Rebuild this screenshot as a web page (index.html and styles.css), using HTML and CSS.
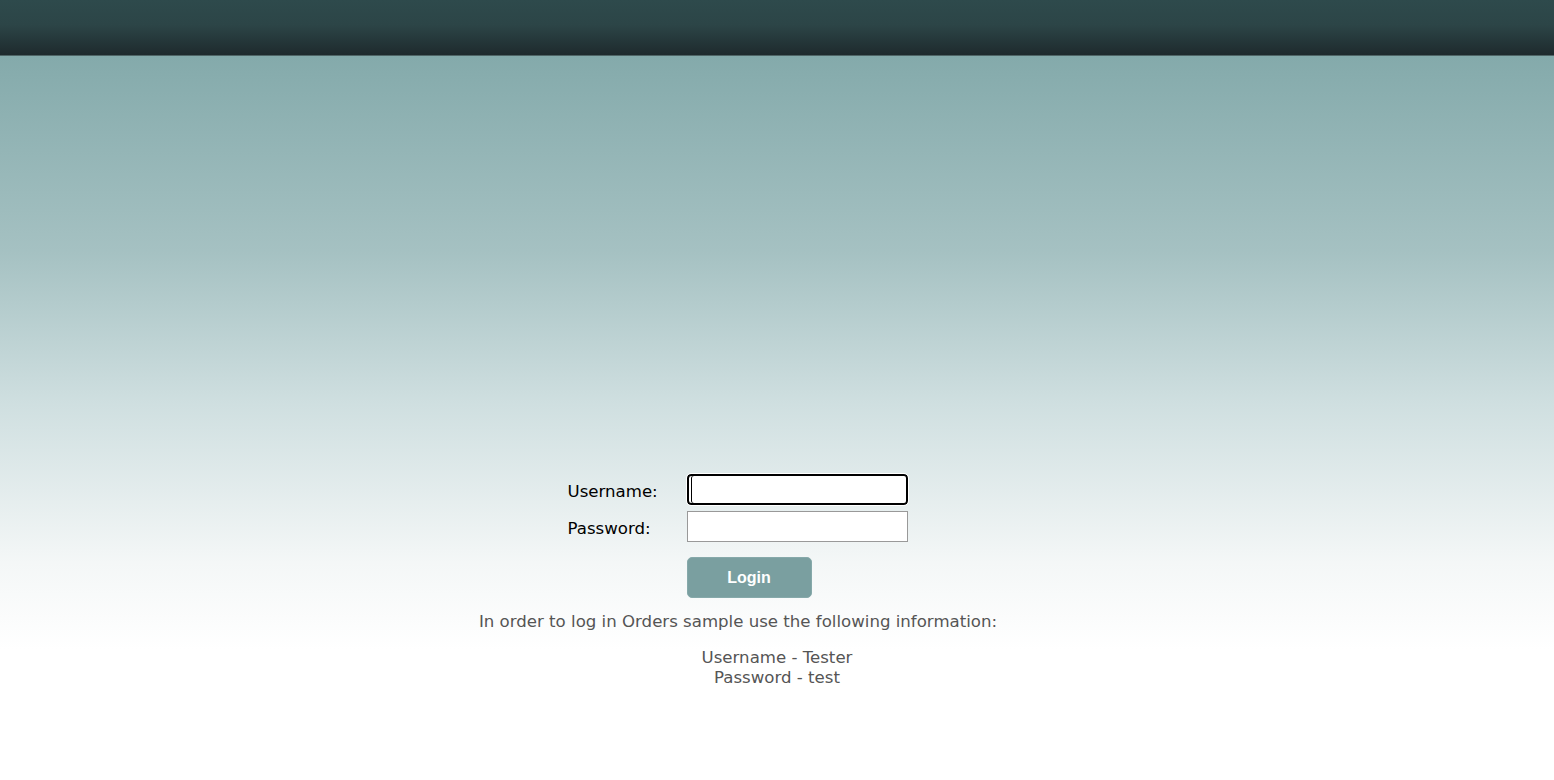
FILE: index.html
```html
<!DOCTYPE html>
<html>
<head>
<meta charset="utf-8">
<title>Login</title>
<link rel="stylesheet" href="styles.css">
</head>
<body>
<header class="topbar"></header>
<main class="page">
  <section class="login">
    <form class="login-form">
      <div class="row">
        <label class="label" for="user">Username:</label>
        <input class="field field-focus" id="user" type="text">
      </div>
      <div class="row">
        <label class="label" for="pass">Password:</label>
        <input class="field" id="pass" type="password">
      </div>
      <div class="row row-button">
        <span class="label"></span>
        <button class="btn" type="button">Login</button>
      </div>
    </form>
    <p class="info">In order to log in Orders sample use the following information:</p>
  </section>
  <div class="creds">
    <div>Username - Tester</div>
    <div>Password - test</div>
  </div>
</main>
</body>
</html>
```

FILE: styles.css
```css
html, body {
  margin: 0;
  padding: 0;
  height: 100%;
}
body {
  font-family: "DejaVu Sans", Verdana, sans-serif;
  background: #ffffff;
}
.topbar {
  height: 55px;
  background: linear-gradient(#2e4a4c 0%, #2c4547 45%, #1e2a2d 100%);
  border-bottom: 1px solid #4f6566;
}
.page {
  height: 724px;
  background: linear-gradient(#84aaab 0%, #a5c1c2 27%, #cfdfe0 48%, #f4f7f7 70%, #ffffff 82%, #ffffff 100%);
  display: flex;
  flex-direction: column;
  align-items: center;
  padding-top: 418px;
  box-sizing: border-box;
}
.login {
  display: flex;
  flex-direction: column;
  align-items: center;
  margin-right: 78px;
}
.login-form {
  display: flex;
  flex-direction: column;
  gap: 6px;
  width: 341px;
  margin-right: 2px;
}
.row {
  display: flex;
  align-items: center;
}
.row-button {
  margin-top: 9px;
}
.label {
  width: 120px;
  box-sizing: border-box;
  padding: 3px 0 0 1px;
  font-size: 16.6px;
  color: #000;
}
.field {
  width: 221px;
  height: 31px;
  box-sizing: border-box;
  border: 1px solid #999;
  background: #fff;
  margin: 0;
  padding: 0 3px;
}
.field-focus {
  border: 2px solid #000;
  border-radius: 4px;
  outline: 1px solid #fff;
  box-shadow: inset 2px 0 0 #fff, inset 3px 0 0 #000;
}
.btn {
  width: 125px;
  height: 41px;
  background: #7a9fa0;
  border: 1px solid #86a9aa;
  border-radius: 5px;
  color: #fff;
  font-family: "Liberation Sans", Arial, sans-serif;
  font-weight: bold;
  font-size: 16px;
  padding: 0;
}
.info {
  margin: 14px 0 0;
  font-size: 16.6px;
  color: #555;
  white-space: nowrap;
}
.creds {
  margin-top: 17px;
  font-size: 16.6px;
  color: #555;
  text-align: center;
  line-height: 20px;
}
```
